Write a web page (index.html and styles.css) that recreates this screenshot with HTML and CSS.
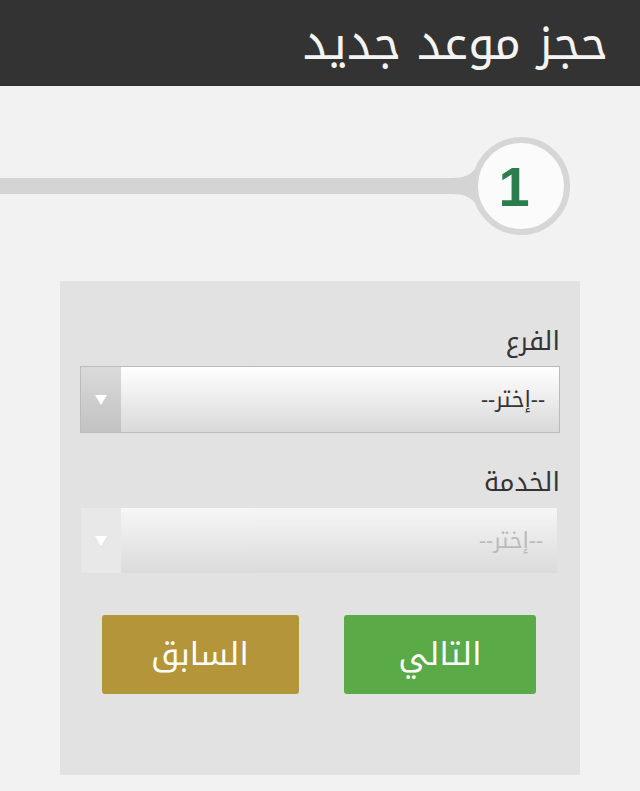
FILE: index.html
```html
<!DOCTYPE html>
<html lang="ar" dir="rtl">
<head>
    <meta charset="UTF-8">
    <meta name="viewport" content="width=device-width, initial-scale=1.0">
    <title>حجز موعد جديد</title>
    <link rel="stylesheet" href="styles.css">
</head>
<body>
    <div class="header">
        <h1>حجز موعد جديد</h1>
    </div>

    <div class="steps">
        <div class="step-circle"><span>1</span></div>
        <svg class="step-joint" width="30" height="60" viewBox="0 0 30 60">
            <path d="M30 12 C 22 22, 14 22, 0 22 L 0 38 C 14 38, 22 38, 30 48 Z" fill="#d4d4d4"/>
        </svg>
        <div class="step-line"></div>
    </div>

    <div class="panel">
        <form>
            <label class="field-label" for="branch">الفرع</label>
            <div class="select-box">
                <select id="branch" name="branch">
                    <option>--إختر--</option>
                </select>
                <span class="select-arrow"></span>
            </div>

            <label class="field-label" for="service">الخدمة</label>
            <div class="select-box disabled">
                <select id="service" name="service" disabled>
                    <option>--إختر--</option>
                </select>
                <span class="select-arrow"></span>
            </div>

            <div class="buttons">
                <button type="button" class="btn btn-next">التالي</button>
                <button type="button" class="btn btn-back">السابق</button>
            </div>
        </form>
    </div>
</body>
</html>
```

FILE: styles.css
```css
body {
    margin: 0;
    background-color: #f2f2f2;
    font-family: "Noto Kufi Arabic", "Noto Sans Arabic", "DejaVu Sans", sans-serif;
    color: #333;
}
.header {
    background-color: #333333;
    height: 86px;
    display: flex;
    align-items: center;
    padding-right: 32px;
}
.header h1 {
    margin: 0;
    color: #f4f4f4;
    font-weight: normal;
    font-size: 47px;
}
.steps {
    display: flex;
    align-items: center;
    margin-top: 51px;
    padding-right: 70px;
}
.step-circle {
    width: 86px;
    height: 86px;
    border: 6px solid #d6d6d6;
    border-radius: 50%;
    background-color: #fbfbfb;
    display: flex;
    justify-content: center;
    align-items: center;
    flex-shrink: 0;
}
.step-circle span {
    color: #2b7d4e;
    font-family: "Liberation Sans", Arial, sans-serif;
    font-weight: bold;
    font-size: 56px;
    margin-right: 14px;
}
.step-joint {
    margin-left: -6px;
    margin-right: -4px;
    flex-shrink: 0;
}
.step-line {
    flex: 1;
    height: 16px;
    background-color: #d4d4d4;
}
.panel {
    margin: 46px 60px 0 60px;
    background-color: #e2e2e2;
    padding: 46px 20px 81px 20px;
}
.field-label {
    display: block;
    font-size: 26px;
    line-height: 30px;
    color: #333;
    margin-bottom: 9px;
}
.select-box {
    display: flex;
    height: 65px;
    border: 1px solid #bbbbbb;
    margin-bottom: 35px;
}
.select-box select {
    flex: 1;
    appearance: none;
    -webkit-appearance: none;
    border: none;
    border-radius: 0;
    background: linear-gradient(#ffffff, #d9d9d9);
    font-family: inherit;
    font-size: 22px;
    color: #333;
    padding: 0 14px;
    outline: none;
}
.select-arrow {
    width: 40px;
    background: linear-gradient(#dadada, #c2c2c2);
    display: flex;
    justify-content: center;
    align-items: center;
}
.select-arrow::after {
    content: "";
    border-left: 6px solid transparent;
    border-right: 6px solid transparent;
    border-top: 10px solid #ffffff;
}
.select-box.disabled {
    border-color: transparent;
    margin-right: 2px;
}
.select-box.disabled select {
    color: #aaaaaa;
    background: linear-gradient(#ffffff, #d8d8d8);
}
.select-box.disabled .select-arrow {
    background: #e8e8e8;
}
.buttons {
    display: grid;
    grid-template-columns: 1fr 1fr;
    margin-top: 41px;
}
.btn {
    justify-self: center;
    height: 79px;
    border: none;
    border-radius: 3px;
    color: #fff;
    font-family: inherit;
    font-size: 32px;
    line-height: 40px;
    cursor: pointer;
}
.btn-next {
    width: 192px;
    background-color: #5aaa47;
}
.btn-back {
    width: 197px;
    background-color: #b5953a;
}
```
